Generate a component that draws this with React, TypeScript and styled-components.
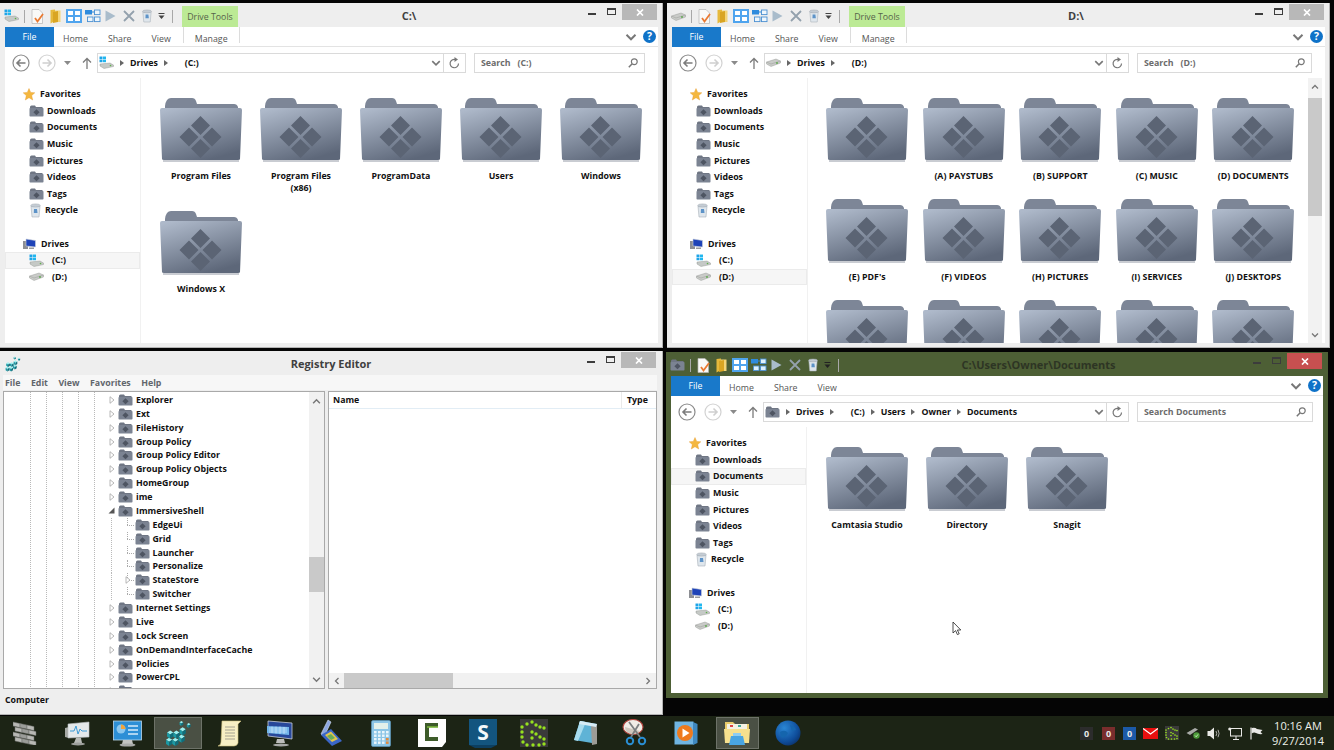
import React from 'react';
import styled, { createGlobalStyle } from 'styled-components';

const Global = createGlobalStyle`
  html, body { margin: 0; padding: 0; width: 1334px; height: 750px; overflow: hidden; background: #050505; }
  * { box-sizing: border-box; }
  body { font-family: "Open Sans", "Noto Sans", sans-serif; }
`;

const Desktop = styled.div`
  position: relative;
  width: 1334px;
  height: 750px;
  background: #050505;
  overflow: hidden;
`;

const Win = styled.section<{ $x: number; $y: number; $w: number; $h: number; $green?: boolean }>`
  position: absolute;
  left: ${p => p.$x}px;
  top: ${p => p.$y}px;
  width: ${p => p.$w}px;
  height: ${p => p.$h}px;
  background: ${p => (p.$green ? '#4d5f35' : '#eeeeee')};
  border-right: 1px solid ${p => (p.$green ? '#4d5f35' : '#b4b4b4')};
  border-bottom: 1px solid ${p => (p.$green ? '#4d5f35' : '#b4b4b4')};
  display: flex;
  flex-direction: column;
  padding: 0 4px 4px 5px;
`;

const TitleBar = styled.header`
  height: 24px;
  flex: none;
  display: flex;
  margin-left: -5px;
  margin-right: -4px;
`;

const Qat = styled.div<{ $w: number }>`
  width: ${p => p.$w}px;
  flex: none;
  display: flex;
  align-items: center;
  padding-left: 3px;
  padding-top: 2px;
`;

const QatSlot = styled.span<{ $w: number }>`
  width: ${p => p.$w}px;
  flex: none;
  display: flex;
  align-items: center;
  justify-content: center;
`;

const QatSep = styled.i`
  width: 1px;
  height: 13px;
  background: #a8a8a8;
`;

const DriveToolsTab = styled.div`
  width: 56px;
  height: 21px;
  align-self: flex-end;
  background: #bcea95;
  color: #56634a;
  font-size: 8.8px;
  display: flex;
  align-items: center;
  justify-content: center;
  flex: none;
`;

const WinTitle = styled.h1<{ $green?: boolean }>`
  flex: 1;
  margin: 0;
  font-size: 11px;
  font-weight: 700;
  text-align: center;
  line-height: 26px;
  color: ${p => (p.$green ? '#2d3524' : '#3f3f3f')};
  white-space: nowrap;
`;

const Controls = styled.div<{ $gapRight: number }>`
  flex: none;
  display: flex;
  align-items: flex-start;
  margin-top: 1px;
  margin-right: ${p => p.$gapRight}px;
`;

const MinGlyph = styled.i`
  width: 8px;
  height: 2px;
  background: #3c3c3c;
  margin: 9px 0 0 8px;
`;

const MaxGlyph = styled.i`
  width: 9px;
  height: 7px;
  border: 1px solid #3c3c3c;
  border-top-width: 2px;
  margin: 4px 6px 0 11px;
`;

const CloseBtn = styled.div<{ $red?: boolean }>`
  width: 35px;
  height: 16px;
  background: ${p => (p.$red ? '#c75050' : '#b8b8b8')};
  color: #fff;
  display: flex;
  align-items: center;
  justify-content: center;
`;

const Ribbon = styled.nav`
  height: 20px;
  flex: none;
  background: #fff;
  display: flex;
  align-items: stretch;
  border-bottom: 1px solid #e3e3e3;
  position: relative;
`;

const FileTab = styled.div`
  width: 49px;
  background: #1979ca;
  color: #fff;
  font-size: 8.8px;
  display: flex;
  align-items: center;
  justify-content: center;
  margin-bottom: -1px;
`;

const Tab = styled.div`
  padding: 4px 10px 0;
  font-size: 8.8px;
  color: #555;
  display: flex;
  align-items: center;
`;

const ManageTab = styled(Tab)`
  margin-left: 2px;
  height: 16px;
  padding-top: 8px;
  padding-left: 11px;
  padding-right: 11px;
  border-left: 1px solid #dcdcdc;
  border-right: 1px solid #dcdcdc;
`;

const TabsStart = styled.div`
  width: 0;
  margin-left: -1px;
`;

const RibbonRight = styled.div`
  margin-left: auto;
  display: flex;
  align-items: center;
  gap: 6px;
  padding-right: 2px;
`;

const Body = styled.div`
  flex: 1;
  min-height: 0;
  background: #fff;
  display: flex;
  flex-direction: column;
`;

const AddressRow = styled.div<{ $right: number }>`
  height: 31px;
  flex: none;
  display: flex;
  align-items: center;
  padding: 0 ${p => p.$right}px 0 7px;
`;

const NavBtns = styled.div`
  width: 85px;
  flex: none;
  display: flex;
  align-items: center;
`;

const NavGap = styled.span<{ $w: number }>`
  width: ${p => p.$w}px;
  flex: none;
`;

const AddressBar = styled.div`
  flex: 1;
  height: 20px;
  border: 1px solid #dadada;
  display: flex;
  align-items: center;
  padding-left: 1px;
  min-width: 0;
`;

const Crumb = styled.span<{ $indent?: number }>`
  font-size: 8.8px;
  font-weight: 700;
  color: #111;
  margin-left: ${p => p.$indent ?? 0}px;
  white-space: nowrap;
`;

const CrumbArrow = styled.span`
  width: 0;
  height: 0;
  border-left: 4px solid #666;
  border-top: 3px solid transparent;
  border-bottom: 3px solid transparent;
  margin: 0 6px;
  flex: none;
`;

const AddressEnd = styled.div`
  margin-left: auto;
  display: flex;
  align-items: center;
  height: 100%;
`;

const AddressChevron = styled.span`
  width: 14px;
  display: flex;
  justify-content: center;
`;

const Refresh = styled.span`
  width: 22px;
  height: 100%;
  border-left: 1px solid #dadada;
  display: flex;
  align-items: center;
  justify-content: center;
`;

const SearchBox = styled.div<{ $w: number }>`
  width: ${p => p.$w}px;
  margin-left: 8px;
  flex: none;
  height: 20px;
  border: 1px solid #dadada;
  display: flex;
  align-items: center;
  justify-content: space-between;
  padding: 0 6px 0 6px;
  font-size: 8.8px;
  font-weight: 700;
  color: #6b6b6b;
  white-space: pre;
`;

const Split = styled.div`
  flex: 1;
  min-height: 0;
  display: flex;
  position: relative;
  overflow: hidden;
`;

const NavPane = styled.aside<{ $top: number }>`
  width: 136px;
  flex: none;
  padding-top: ${p => p.$top}px;
  border-right: 1px solid #f1f1f1;
`;

const NavHead = styled.div<{ $gapTop?: boolean }>`
  height: 16.6px;
  margin-top: ${p => (p.$gapTop ? 16.6 : 0)}px;
  display: flex;
  align-items: center;
  padding-left: 18px;
  gap: 5px;
  font-size: 8.8px;
  font-weight: 700;
  color: #111;
`;

const NavItem = styled.div<{ $selected?: boolean; $gap: number }>`
  height: 16.6px;
  display: flex;
  align-items: center;
  padding-left: 24px;
  gap: ${p => p.$gap}px;
  font-size: 8.8px;
  font-weight: 700;
  color: #111;
  background: ${p => (p.$selected ? '#f6f6f6' : 'transparent')};
  box-shadow: ${p => (p.$selected ? 'inset 0 0 0 1px #ebebeb' : 'none')};
`;

const Tiles = styled.div<{ $col: number; $row: number; $left: number }>`
  flex: 1;
  min-width: 0;
  display: grid;
  grid-template-columns: repeat(auto-fill, ${p => p.$col}px);
  grid-auto-rows: ${p => p.$row}px;
  padding: 19px 0 0 ${p => p.$left}px;
  align-content: start;
`;

const Tile = styled.figure`
  margin: 0;
  display: flex;
  flex-direction: column;
  align-items: center;
`;

const TileLabel = styled.figcaption`
  margin-top: 7px;
  font-size: 8.8px;
  line-height: 12px;
  font-weight: 700;
  color: #111;
  text-align: center;
  white-space: pre-line;
`;

const VScroll = styled.div`
  position: absolute;
  top: 0;
  right: 3px;
  bottom: 0;
  width: 14px;
  background: #f2f2f2;
  display: flex;
  flex-direction: column;
  align-items: center;
  padding-top: 5px;
`;

const VThumb = styled.div`
  width: 14px;
  height: 118px;
  background: #c9c9c9;
  margin-top: 7px;
`;

const VDown = styled.div`
  margin-top: auto;
  margin-bottom: 4px;
  display: flex;
`;

/* Registry editor */
const RegWin = styled(Win)`
  padding: 0 5px 0 3px;
`;

const RegTitleRow = styled.header`
  height: 24px;
  flex: none;
  display: flex;
  margin-left: -3px;
  margin-right: -5px;
  position: relative;
`;

const RegIcon = styled.span`
  width: 83px;
  flex: none;
  padding: 4px 0 0 5px;
`;

const MenuBar = styled.div`
  height: 15px;
  flex: none;
  background: #f7f7f7;
  display: flex;
  align-items: center;
  gap: 10.5px;
  padding-left: 2px;
  font-size: 8.8px;
  font-weight: 700;
  color: #62666c;
`;

const Panes = styled.div`
  flex: none;
  height: 298px;
  margin-top: 1px;
  display: grid;
  grid-template-columns: 322px 329px;
  gap: 3px;
`;

const Pane = styled.div`
  border: 1px solid #a9a9a9;
  background: #fff;
  position: relative;
  overflow: hidden;
  display: flex;
  flex-direction: column;
`;

const dotted = 'repeating-linear-gradient(to bottom, #b9b9b9 0 1px, transparent 1px 2px)';

const TreePane = styled(Pane)`
  background-color: #fff;
  background-image: ${dotted}, ${dotted}, ${dotted}, ${dotted}, ${dotted};
  background-size: 1px 100%;
  background-repeat: no-repeat;
  background-position: 26px 0, 42px 0, 58px 0, 74px 0, 90px 0;
  padding-top: 1px;
`;

const TreeRow = styled.div<{ $child?: boolean }>`
  height: 13.88px;
  flex: none;
  display: flex;
  align-items: center;
  padding-left: ${p => (p.$child ? 119 : 102.5)}px;
  font-size: 8.8px;
  font-weight: 700;
  color: #111;
  white-space: nowrap;
  position: relative;
  ${p =>
    p.$child
      ? `background-image: ${dotted};
         background-size: 1px 100%;
         background-repeat: no-repeat;
         background-position: 107px 0;
         &::before { content: ""; position: absolute; left: 123px; top: 0; height: 50%; border-left: 1px dotted #aaa; }
         &::after { content: ""; position: absolute; left: 123px; top: 50%; width: 7px; border-top: 1px dotted #aaa; }`
      : ''}
`;

const Expander = styled.span`
  width: 10px;
  flex: none;
  display: flex;
  justify-content: center;
  position: relative;
  z-index: 1;
`;

const TreeFolder = styled.span`
  margin: 0 3px 0 1.5px;
  display: flex;
  position: relative;
  z-index: 1;
`;

const TreeScroll = styled.div`
  position: absolute;
  top: 0;
  right: 0;
  bottom: 0;
  width: 15px;
  background: #f1f1f1;
  display: flex;
  flex-direction: column;
  align-items: center;
  padding-top: 5px;
  z-index: 2;
`;

const TreeThumb = styled.div`
  width: 15px;
  height: 35px;
  background: #c9c9c9;
  margin-top: 151px;
`;

const ListHead = styled.div`
  height: 17px;
  flex: none;
  display: flex;
  justify-content: space-between;
  align-items: center;
  font-size: 8.8px;
  font-weight: 700;
  color: #111;
  padding-left: 4px;
  border-bottom: 1px solid #e2edf5;
`;

const TypeCell = styled.span`
  width: 35px;
  padding-left: 5px;
  height: 100%;
  display: flex;
  align-items: center;
  border-left: 1px solid #eaeaea;
`;

const HScroll = styled.div`
  margin-top: auto;
  height: 15px;
  flex: none;
  background: #f1f1f1;
  display: flex;
  align-items: center;
  padding-left: 4px;
  padding-right: 4px;
  justify-content: space-between;
`;

const HThumb = styled.div`
  position: absolute;
  left: 15px;
  bottom: 0;
  width: 109px;
  height: 15px;
  background: #c9c9c9;
`;

const Status = styled.footer`
  flex: 1;
  font-size: 8.8px;
  font-weight: 700;
  color: #111;
  padding: 5px 0 0 2px;
`;

/* Taskbar */
const Taskbar = styled.footer`
  position: absolute;
  left: 0;
  right: 0;
  bottom: 0;
  height: 34px;
  background: #1c2415;
  display: flex;
  align-items: stretch;
  padding-left: 0.5px;
`;

const TaskSlot = styled.div`
  width: 50.8px;
  flex: none;
  display: flex;
  align-items: center;
  justify-content: center;
`;

const TaskInner = styled.div<{ $active?: boolean; $w?: number }>`
  width: ${p => p.$w ?? 48}px;
  height: 32px;
  display: flex;
  align-items: center;
  justify-content: center;
  background: ${p => (p.$active ? '#4a5044' : 'transparent')};
  box-shadow: ${p => (p.$active ? 'inset 0 0 0 1px #6d7268' : 'none')};
`;

const Tray = styled.div`
  margin-left: auto;
  display: flex;
  align-items: center;
  padding-right: 5px;
`;

const TraySlot = styled.span`
  width: 21.2px;
  display: flex;
  justify-content: center;
  align-items: center;
`;

const Clock = styled.time`
  width: 62px;
  color: #eef0ea;
  font-size: 11px;
  line-height: 15px;
  text-align: center;
  white-space: nowrap;
`;

const Cursor = styled.svg`
  position: absolute;
  left: 952px;
  top: 621px;
`;

/* ---------- drawings ---------- */
const FolderDefs = () => (
  <defs>
    <linearGradient id="fbody" x1="0.15" y1="0" x2="0.6" y2="1">
      <stop offset="0" stopColor="#aeb9ca" />
      <stop offset="1" stopColor="#5d6779" />
    </linearGradient>
  </defs>
);

const Folder = ({ w = 82, h = 66 }: { w?: number; h?: number }) => (
  <svg width={w} height={h} viewBox="0 0 82 66">
    <FolderDefs />
    <path d="M5 9 Q6 1 11 1 L32 1 Q35 1 36 4 L37 7 L74 7 Q77 7 78 10 L78 12 L5 12Z" fill="#7d8697" />
    <path d="M2 11 H80 Q82 11 82 13 L80 62 Q80 63 78 63 H4 Q2 63 2 62 L0 13 Q0 11 2 11Z" fill="url(#fbody)" />
    <rect x="3" y="63" width="76" height="2" fill="#c9ccd2" />
    <path d="M40.5 19 L50 28.5 L40.5 38 L31 28.5Z M52 30.5 L61.5 40 L52 49.5 L42.5 40Z M40.5 42 L50 51.5 L40.5 61 L31 51.5Z M29 30.5 L38.5 40 L29 49.5 L19.5 40Z" fill="#5b6474" />
  </svg>
);

const SmallFolder = () => (
  <svg width="15" height="12" viewBox="0 0 15 12">
    <path d="M1 2 Q1 0.5 2.5 0.5 H6 L7 2 H13.5 V3.5 H1Z" fill="#6f7684" />
    <rect x="0.5" y="3" width="14" height="8.5" rx="0.8" fill="#7b8392" />
    <path d="M7.5 4.2 L10.6 7.2 L7.5 10.2 L4.4 7.2Z" fill="#4e5562" />
  </svg>
);

const Star = () => (
  <svg width="12" height="13" viewBox="0 0 12 13">
    <path d="M6 0.5 L7.7 4.4 L11.8 4.8 L8.7 7.6 L9.7 12 L6 9.7 L2.3 12 L3.3 7.6 L0.2 4.8 L4.3 4.4Z" fill="#f4b73f" stroke="#e69a2e" strokeWidth="0.4" />
  </svg>
);

const Bin = ({ size = 13 }: { size?: number }) => (
  <svg width={size} height={size + 2} viewBox="0 0 13 15">
    <path d="M2 3 L11 3 L10 14 H3Z" fill="#dfe6ec" stroke="#a8b0b8" strokeWidth="0.6" />
    <ellipse cx="6.5" cy="2.5" rx="4.8" ry="1.6" fill="#c4ccd4" stroke="#9aa2aa" strokeWidth="0.5" />
    <path d="M5 6 L8 6 L8.5 10 L4.8 10Z" fill="#5d93c8" />
  </svg>
);

const DriveC = ({ w = 15 }: { w?: number }) => (
  <svg width={w} height={w * 0.87} viewBox="0 0 15 13">
    <rect x="0.5" y="0.5" width="3" height="2.6" fill="#1ea4e8" />
    <rect x="4" y="0.5" width="3" height="2.6" fill="#21b7ef" />
    <rect x="0.5" y="3.6" width="3" height="2.6" fill="#1ea4e8" />
    <rect x="4" y="3.6" width="3" height="2.6" fill="#21b7ef" />
    <path d="M1 8 L11 7 L14.5 9 L14.5 10.5 L5 12.5 L1 10Z" fill="#c5c9c6" stroke="#8b8f8b" strokeWidth="0.4" />
    <circle cx="11.5" cy="9.5" r="0.8" fill="#5fb04a" />
  </svg>
);

const DriveD = ({ w = 15 }: { w?: number }) => (
  <svg width={w} height={w * 0.6} viewBox="0 0 15 9">
    <path d="M0.5 4 L10 1 L14.5 3 L14.5 5 L5 8.5 L0.5 6Z" fill="#c9cbc8" stroke="#8d8f8d" strokeWidth="0.4" />
    <path d="M0.5 4 L5 6 L14.5 3" fill="none" stroke="#8d8f8d" strokeWidth="0.4" />
    <circle cx="11" cy="5" r="0.9" fill="#58a848" />
  </svg>
);

const DrivesPc = () => (
  <svg width="13" height="12" viewBox="0 0 13 12">
    <rect x="0" y="3" width="5" height="8" fill="#8d8f94" />
    <path d="M3 1 L12.5 2.5 V9 L3 8Z" fill="#1e43b8" stroke="#cfd3dc" strokeWidth="0.6" />
    <rect x="6" y="9.5" width="5" height="1.5" fill="#9a9ca0" />
  </svg>
);

const DocCheck = () => (
  <svg width="13" height="15" viewBox="0 0 13 15">
    <path d="M1 0.5 H8 L11.5 4 V14.5 H1Z" fill="#f9f9f7" stroke="#b5b5b5" strokeWidth="0.7" />
    <path d="M4 9 L6.5 12.5 L12 5" fill="none" stroke="#ea7a32" strokeWidth="1.8" />
  </svg>
);

const BookFolder = () => (
  <svg width="11" height="15" viewBox="0 0 11 15">
    <path d="M0.5 1 L5 0.5 V12 L0.5 14.5Z" fill="#e6b93c" />
    <path d="M5 1.5 H10.5 V13 H5Z" fill="#f3d478" />
    <path d="M3 3 L8 2 V13 L3 14Z" fill="#d9a523" />
  </svg>
);

const BlueGrid = ({ filled }: { filled?: boolean }) => (
  <svg width="16" height="14" viewBox="0 0 16 14">
    {filled && <rect width="16" height="14" fill="#4fa4ee" />}
    {[
      [2, 2],
      [9, 2],
      [2, 8],
      [9, 8]
    ].map(([x, y]) => (
      <rect key={`${x}-${y}`} x={x} y={y} width="5" height="4" fill={filled ? '#fff' : '#eef6fc'} stroke={filled ? 'none' : '#4a90d2'} strokeWidth="0.9" />
    ))}
  </svg>
);

const Grid2 = ({ solid }: { solid?: boolean }) => (
  <svg width="16" height="14" viewBox="0 0 16 14">
    <rect x="0" y="1" width="7" height="4.5" fill="#2f8bdd" />
    <path d="M7 3 L10 3" stroke="#2f8bdd" strokeWidth="1" />
    {[
      [9.5, 1],
      [2.5, 8],
      [9.5, 8]
    ].map(([x, y]) => (
      <rect key={`${x}-${y}`} x={x} y={y} width="5.5" height="4.6" fill={solid ? '#dff0fb' : '#eef6fc'} stroke="#4a90d2" strokeWidth="0.9" />
    ))}
  </svg>
);

const Play = () => (
  <svg width="11" height="12" viewBox="0 0 11 12">
    <path d="M0.5 0.5 L10.5 6 L0.5 11.5Z" fill="#a9bccb" />
  </svg>
);

const Cross = () => (
  <svg width="12" height="12" viewBox="0 0 12 12">
    <path d="M1 1 L11 11 M11 1 L1 11" stroke="#93a1ad" strokeWidth="1.8" />
  </svg>
);

const DropSmall = ({ dark }: { dark?: boolean }) => (
  <svg width="7" height="7" viewBox="0 0 7 7">
    <rect x="0.5" y="0" width="6" height="1" fill={dark ? '#222' : '#444'} />
    <path d="M0.5 2.5 H6.5 L3.5 6Z" fill={dark ? '#222' : '#444'} />
  </svg>
);

const CircleArrow = ({ light, back }: { light?: boolean; back?: boolean }) => (
  <svg width="18" height="18" viewBox="0 0 18 18">
    <circle cx="9" cy="9" r="8" fill="none" stroke={light ? '#d2d2d2' : '#8a8a8a'} strokeWidth="1.2" />
    <path d={back ? 'M13.5 9 H5 M8.5 5.5 L5 9 L8.5 12.5' : 'M4.5 9 H13 M9.5 5.5 L13 9 L9.5 12.5'} fill="none" stroke={light ? '#cfcfcf' : '#7c7c7c'} strokeWidth="1.6" />
  </svg>
);

const TinyDown = () => (
  <svg width="7" height="4" viewBox="0 0 7 4">
    <path d="M0 0 H7 L3.5 4Z" fill="#8a8a8a" />
  </svg>
);

const UpArrow = () => (
  <svg width="10" height="12" viewBox="0 0 10 12">
    <path d="M5 12 V1.5 M1 5.5 L5 1.5 L9 5.5" fill="none" stroke="#7b7b7b" strokeWidth="1.3" />
  </svg>
);

const Chev = ({ dir = 'down', size = 8, color = '#777' }: { dir?: 'down' | 'up' | 'left' | 'right'; size?: number; color?: string }) => {
  const d = { down: 'M1 2.5 L4 5.5 L7 2.5', up: 'M1 5.5 L4 2.5 L7 5.5', left: 'M5.5 1 L2.5 4 L5.5 7', right: 'M2.5 1 L5.5 4 L2.5 7' }[dir];
  return (
    <svg width={size} height={size} viewBox="0 0 8 8">
      <path d={d} fill="none" stroke={color} strokeWidth="1.3" />
    </svg>
  );
};

const RefreshIcon = () => (
  <svg width="11" height="12" viewBox="0 0 11 12">
    <path d="M9.5 6.5 A4.2 4.2 0 1 1 6.5 2.5" fill="none" stroke="#777" strokeWidth="1.2" />
    <path d="M5.5 0 L9 2.5 L5.5 5Z" fill="#777" />
  </svg>
);

const Magnifier = () => (
  <svg width="10" height="10" viewBox="0 0 10 10">
    <circle cx="6.3" cy="3.7" r="2.9" fill="none" stroke="#777" strokeWidth="1.2" />
    <path d="M4.2 5.8 L0.8 9.2" stroke="#777" strokeWidth="1.5" />
  </svg>
);

const Help = () => (
  <svg width="13" height="13" viewBox="0 0 13 13">
    <circle cx="6.5" cy="6.5" r="6.5" fill="#0f72c8" />
    <text x="6.5" y="10.3" textAnchor="middle" fontSize="10.5" fontWeight="700" fill="#fff" fontFamily="Open Sans">?</text>
  </svg>
);

const CloseX = () => (
  <svg width="8" height="7" viewBox="0 0 8 7">
    <path d="M1 0.5 L7 6.5 M7 0.5 L1 6.5" stroke="#fff" strokeWidth="1.7" />
  </svg>
);

const Cube = ({ x, y, s = 1 }: { x: number; y: number; s?: number }) => (
  <g transform={`translate(${x} ${y}) scale(${s})`}>
    <path d="M0 2 L3 0 L6 2 L3 4Z" fill="#9df0f0" />
    <path d="M0 2 L3 4 V8 L0 6Z" fill="#1b9aa5" />
    <path d="M6 2 L3 4 V8 L6 6Z" fill="#0e6e7c" />
  </g>
);

const Regedit = ({ size = 26 }: { size?: number }) => (
  <svg width={size} height={size} viewBox="0 0 26 26">
    <Cube x={1} y={17} />
    <Cube x={7} y={17} />
    <Cube x={13} y={14} />
    <Cube x={2} y={10} />
    <Cube x={8} y={10} />
    <Cube x={14} y={7} />
    <Cube x={14} y={1} s={0.6} />
    <Cube x={21} y={3} s={0.6} />
  </svg>
);

/* Taskbar art */
const Wall = () => (
  <svg width="25" height="24" viewBox="0 0 25 24">
    {[0, 5, 10, 15].map(r =>
      [0, 1, 2].map(c => (
        <path key={`${r}-${c}`} d={`M${c * 7 + (r % 10 ? 2 : 0)} ${r + c * 1.5 + 1} l7 1.6 v4 l-7 -1.6Z`} fill={c % 2 ? '#9a9c98' : '#b7b8b4'} stroke="#6b6c68" strokeWidth="0.5" />
      ))
    )}
  </svg>
);

const PulseMonitor = () => (
  <svg width="26" height="26" viewBox="0 0 26 26">
    <path d="M1 8 L5 7 V18 L1 17Z" fill="#a5a8a4" />
    <path d="M4 4 L25 2 V17 L4 18Z" fill="#e4e8ea" stroke="#b9bdbf" strokeWidth="0.6" />
    <path d="M6 11 H10 L12 6 L14 14 L16 9 L18 11 H23" fill="none" stroke="#3d9ad5" strokeWidth="1" />
    <path d="M12 18 H17 L18 23 H10Z" fill="#b8bab7" />
    <ellipse cx="14" cy="24" rx="7" ry="1.5" fill="#9d9f9c" />
  </svg>
);

const DashMonitor = () => (
  <svg width="29" height="27" viewBox="0 0 29 27">
    <rect x="0.5" y="1" width="28" height="19" fill="#2d8fd6" stroke="#bcd9ee" strokeWidth="0.8" />
    <circle cx="8" cy="9" r="4.5" fill="#8cc7ee" />
    <path d="M8 4.5 A4.5 4.5 0 0 1 12.5 9 H8Z" fill="#f2a43b" />
    <path d="M15 6 H25 M15 10 H25 M15 14 H25" stroke="#d6ecfa" strokeWidth="1.4" />
    <path d="M10 20 H19 L20 24 H9Z" fill="#c2c4c2" />
    <ellipse cx="14.5" cy="25" rx="8" ry="1.6" fill="#a8aaa8" />
  </svg>
);

const Scroll = () => (
  <svg width="25" height="27" viewBox="0 0 25 27">
    <path d="M5 1 H24 L21 4 V23 Q20 26 17 26 H1 Q4 25 4 22Z" fill="#f7efc4" stroke="#cdbf7c" strokeWidth="0.6" />
    <path d="M8 7 H18 M8 10 H18 M8 13 H18 M8 16 H18 M8 19 H18" stroke="#9b9a8c" strokeWidth="0.9" />
  </svg>
);

const KeyboardMon = () => (
  <svg width="27" height="27" viewBox="0 0 27 27">
    <path d="M2 1 L26 3 V19 L2 16Z" fill="#27489b" stroke="#c8cdd8" strokeWidth="0.8" />
    <path d="M1 6 L23 7 V15 L1 13Z" fill="#71b5ea" />
    <path d="M3 8 H21 M3 10 H21 M3 12 H21 M6 6.5 V13 M10 6.5 V13.5 M14 6.5 V14 M18 7 V14" stroke="#dcefff" strokeWidth="0.6" />
    <path d="M11 19 H18 L19 23 H10Z" fill="#bcbdbb" />
    <ellipse cx="15" cy="25" rx="8" ry="1.5" fill="#a6a8a6" />
  </svg>
);

const Scanner = () => (
  <svg width="24" height="28" viewBox="0 0 24 28">
    <path d="M9 1 L12 3 L5 18 L2 15Z" fill="#8ba6e0" stroke="#d9e2f5" strokeWidth="0.6" />
    <path d="M2 16 L12 10 L23 22 L13 27Z" fill="#3a66c8" />
    <path d="M6 16 L12 12.5 L19 20 L13 23Z" fill="#e2c54e" />
    <path d="M8 17 L12 15 L16 19 L12 21Z" fill="#68ad5a" />
  </svg>
);

const Calc = () => (
  <svg width="20" height="27" viewBox="0 0 20 27">
    <rect x="0.5" y="0.5" width="19" height="26" rx="1.5" fill="#8cc5e6" stroke="#5c9cc4" strokeWidth="0.6" />
    <rect x="3" y="3" width="14" height="6" fill="#e2f0ea" />
    {[11, 14.5, 18, 21.5].map(y =>
      [3, 7, 11, 15].map(x => <rect key={`${x}-${y}`} x={x} y={y} width="2.6" height="2.4" fill={x === 15 && y > 17 ? '#e48a3c' : '#eaf5fb'} />)
    )}
  </svg>
);

const Camtasia = ({ size = 28 }: { size?: number }) => (
  <svg width={size} height={size} viewBox="0 0 28 28">
    <path d="M0 0 H28 V23 L24 28 H0Z" fill="#fdfdfd" />
    <path d="M20 6 H9 V20 H20" fill="none" stroke="#3c5a28" strokeWidth="4" />
    <path d="M9 8 H20" stroke="#79b43a" strokeWidth="1.6" />
  </svg>
);

const Snagit = () => (
  <svg width="28" height="29" viewBox="0 0 28 29">
    <rect x="0" y="0" width="28" height="26" fill="#13557f" />
    <path d="M0 26 H28 L22 29 H6Z" fill="#0d3f60" />
    <text x="14" y="21" textAnchor="middle" fontSize="21" fontWeight="700" fontFamily="Open Sans" fill="#f4f8fa">S</text>
  </svg>
);

const dots = [[2, 8], [2, 13], [2, 18], [3, 23], [7, 5], [12, 3], [16, 6], [20, 8], [24, 9], [7, 26], [12, 13], [16, 15], [20, 18], [24, 20], [24, 25], [19, 26], [13, 26], [12, 19]];
const Greenshot = ({ size = 28 }: { size?: number }) => (
  <svg width={size} height={size} viewBox="0 0 28 28">
    <rect width="28" height="28" fill="#3a3a3a" />
    {dots.map(([x, y]) => <circle key={`${x}-${y}`} cx={x} cy={y} r="1.7" fill="#96e01e" />)}
  </svg>
);

const Notepad = () => (
  <svg width="26" height="26" viewBox="0 0 26 26">
    <path d="M8 1 L25 4 L20 23 L2 20Z" fill="#5fb3d6" />
    <path d="M8 1 L14 2 L6 21 L2 20Z" fill="#a8dcee" />
    <path d="M19 6 L25 4 V24 L20 25Z" fill="#9c9c96" />
    <path d="M8 1 L25 4 L24 7 L7 4Z" fill="#d7ecf5" />
  </svg>
);

const Snip = () => (
  <svg width="26" height="29" viewBox="0 0 26 29">
    <ellipse cx="11" cy="8" rx="10" ry="7.5" fill="#f1ece6" stroke="#b1453f" strokeWidth="1.1" />
    <path d="M3 8 Q3 15 11 15 Q16 15 18 12" fill="#cfc8be" />
    <path d="M7 3 L18 18 M17 5 L9 18" stroke="#7c7f80" strokeWidth="1.8" />
    <circle cx="8" cy="22" r="3.2" fill="none" stroke="#2a8ed3" strokeWidth="2" />
    <circle cx="20" cy="22" r="3.2" fill="none" stroke="#2a8ed3" strokeWidth="2" />
  </svg>
);

const MediaPlayer = () => (
  <svg width="24" height="24" viewBox="0 0 24 24">
    <rect x="0.5" y="0.5" width="19" height="23" fill="#6fb4e2" />
    <path d="M19 1 L23.5 3 V22 L19 24Z" fill="#3f88bf" />
    <circle cx="11" cy="12" r="8" fill="#ee7a1e" />
    <path d="M8.5 7.5 L15.5 12 L8.5 16.5Z" fill="#fff" />
  </svg>
);

const ExplorerIcon = () => (
  <svg width="28" height="28" viewBox="0 0 28 28">
    <path d="M2 3 H10 L12 5 H26 V23 H2Z" fill="#e9cb6a" />
    <rect x="4" y="5" width="20" height="5" fill="#f5f2e4" />
    <rect x="7" y="6" width="3" height="2" fill="#d44" />
    <rect x="15" y="6" width="3" height="2" fill="#4a9" />
    <path d="M1 10 H27 L26 24 H2Z" fill="#f6e08e" />
    <path d="M8 17 H20 L22 26 H6Z" fill="#49a5e2" />
    <path d="M10 14 H18 V17 H10Z" fill="#8ecdf2" />
  </svg>
);

const Globe = () => (
  <svg width="26" height="26" viewBox="0 0 26 26">
    <defs>
      <radialGradient id="gl" cx="0.35" cy="0.3" r="0.85">
        <stop offset="0" stopColor="#2a86d4" />
        <stop offset="0.65" stopColor="#0f4d9a" />
        <stop offset="1" stopColor="#0a2a5c" />
      </radialGradient>
    </defs>
    <circle cx="13" cy="13" r="12.5" fill="url(#gl)" />
    <path d="M5 12 Q10 9 13 13 Q10 19 6 17Z M15 5 Q20 6 21 10 L17 11Z" fill="#1565ad" />
  </svg>
);

const Badge = ({ c }: { c: string }) => (
  <svg width="13" height="13" viewBox="0 0 13 13">
    <rect width="13" height="13" fill={c} />
    <text x="6.5" y="10" textAnchor="middle" fontSize="9" fontWeight="700" fontFamily="Open Sans" fill="#e9e9e9">0</text>
  </svg>
);

const Mail = () => (
  <svg width="15" height="11" viewBox="0 0 15 11">
    <rect width="15" height="11" fill="#e8100f" />
    <path d="M0 0.5 L7.5 6 L15 0.5" fill="none" stroke="#fff" strokeWidth="1.2" />
  </svg>
);

const TrayUsb = () => (
  <svg width="14" height="12" viewBox="0 0 14 12">
    <path d="M0.5 6 L9 1 L12 2.5 L4 8Z" fill="#a9aba8" />
    <circle cx="10.5" cy="8.5" r="3.2" fill="#4d9c3a" />
    <path d="M9 8.5 L10.2 9.8 L12 7.4" fill="none" stroke="#dff2d6" strokeWidth="0.8" />
  </svg>
);

const Speaker = () => (
  <svg width="14" height="13" viewBox="0 0 14 13">
    <path d="M0.5 4 H3 L7 0.5 V12.5 L3 9 H0.5Z" fill="#e9e9e6" />
    <path d="M9 4 Q10.5 6.5 9 9 M11 2.8 Q13.2 6.5 11 10.2" fill="none" stroke="#b8b8b4" strokeWidth="0.9" />
  </svg>
);

const TrayNet = () => (
  <svg width="14" height="13" viewBox="0 0 14 13">
    <rect x="2.5" y="1.5" width="11" height="7.5" fill="none" stroke="#e9e9e6" strokeWidth="1" />
    <path d="M8 9 V12 M5 12.5 H11" stroke="#e9e9e6" strokeWidth="1" />
    <circle cx="1.8" cy="2" r="1.6" fill="#e9e9e6" />
  </svg>
);

const TrayFlag = () => (
  <svg width="13" height="13" viewBox="0 0 13 13">
    <path d="M1 0.5 V12.5" stroke="#e9e9e6" strokeWidth="1.2" />
    <path d="M1.6 1 Q5 0 7 2 L12.5 3 L10.5 5 L12.5 7 Q8 7.5 6 6 Q4 5 1.6 6.5Z" fill="#e9e9e6" />
  </svg>
);

/* ---------- data ---------- */
const favourites = ['Downloads', 'Documents', 'Music', 'Pictures', 'Videos', 'Tags'];

type TreeItem = [string, boolean?, 'exp' | 'none' | 'col'?];
const tree: TreeItem[] = [
  ['Explorer'], ['Ext'], ['FileHistory'], ['Group Policy'], ['Group Policy Editor'], ['Group Policy Objects'],
  ['HomeGroup'], ['ime'], ['ImmersiveShell', false, 'exp'],
  ['EdgeUi', true, 'none'], ['Grid', true, 'none'], ['Launcher', true, 'none'], ['Personalize', true, 'none'],
  ['StateStore', true, 'col'], ['Switcher', true, 'none'],
  ['Internet Settings'], ['Live'], ['Lock Screen'], ['OnDemandInterfaceCache'], ['Policies'], ['PowerCPL'], ['']
];

const Side = ({ selected, top }: { selected: string; top: number }) => (
  <NavPane $top={top}>
    <NavHead><Star />Favorites</NavHead>
    {favourites.map(f => (
      <NavItem key={f} $gap={3} $selected={selected === f}><SmallFolder />{f}</NavItem>
    ))}
    <NavItem $gap={3}><Bin size={13} />Recycle</NavItem>
    <NavHead $gapTop><DrivesPc />Drives</NavHead>
    <NavItem $gap={8} $selected={selected === 'C'}><DriveC />(C:)</NavItem>
    <NavItem $gap={8} $selected={selected === 'D'}><DriveD />(D:)</NavItem>
  </NavPane>
);

interface ExplorerProps {
  x: number; y: number; w: number; h: number;
  title: string;
  green?: boolean;
  driveTools?: boolean;
  qatIcon: React.ReactNode;
  qatWidth: number;
  crumbs: [string, number?][];
  crumbIcon: React.ReactNode;
  search: string;
  searchW: number;
  rowRight: number;
  selected: string;
  navTop: number;
  tiles: string[];
  col: number; row: number; left: number;
  scroll?: boolean;
}

const Explorer = (p: ExplorerProps) => (
  <Win $x={p.x} $y={p.y} $w={p.w} $h={p.h} $green={p.green}>
    <TitleBar>
      <Qat $w={p.qatWidth}>
        <QatSlot $w={17}>{p.qatIcon}</QatSlot>
        <QatSlot $w={8}><QatSep /></QatSlot>
        <QatSlot $w={19}><DocCheck /></QatSlot>
        <QatSlot $w={17}><BookFolder /></QatSlot>
        <QatSlot $w={20}><BlueGrid filled /></QatSlot>
        <QatSlot $w={17}><Grid2 solid={p.green} /></QatSlot>
        <QatSlot $w={19}><Play /></QatSlot>
        <QatSlot $w={17}><Cross /></QatSlot>
        <QatSlot $w={19}><Bin size={12} /></QatSlot>
        <QatSlot $w={10}><DropSmall dark={p.green} /></QatSlot>
        <QatSlot $w={12}><QatSep /></QatSlot>
      </Qat>
      {p.driveTools && <DriveToolsTab>Drive Tools</DriveToolsTab>}
      <WinTitle $green={p.green}>{p.title}</WinTitle>
      <Controls $gapRight={5}>
        <MinGlyph />
        <MaxGlyph />
        <CloseBtn $red={p.green}><CloseX /></CloseBtn>
      </Controls>
    </TitleBar>
    <Ribbon>
      <FileTab>File</FileTab>
      <TabsStart />
      <Tab>Home</Tab>
      <Tab>Share</Tab>
      <Tab>View</Tab>
      {p.driveTools && <ManageTab>Manage</ManageTab>}
      <RibbonRight>
        <Chev size={12} />
        <Help />
      </RibbonRight>
    </Ribbon>
    <Body>
      <AddressRow $right={p.rowRight}>
        <NavBtns>
          <CircleArrow back />
          <NavGap $w={8} />
          <CircleArrow light />
          <NavGap $w={8} />
          <TinyDown />
          <NavGap $w={11} />
          <UpArrow />
        </NavBtns>
        <AddressBar>
          {p.crumbIcon}
          {p.crumbs.map(([c, indent]) => (
            <React.Fragment key={c}>
              <CrumbArrow />
              <Crumb $indent={indent}>{c}</Crumb>
            </React.Fragment>
          ))}
          <AddressEnd>
            <AddressChevron><Chev size={10} /></AddressChevron>
            <Refresh><RefreshIcon /></Refresh>
          </AddressEnd>
        </AddressBar>
        <SearchBox $w={p.searchW}>{p.search}<Magnifier /></SearchBox>
      </AddressRow>
      <Split>
        <Side selected={p.selected} top={p.navTop} />
        <Tiles $col={p.col} $row={p.row} $left={p.left}>
          {p.tiles.map((t, i) => (
            <Tile key={`${t}-${i}`}>
              <Folder />
              <TileLabel>{t}</TileLabel>
            </Tile>
          ))}
        </Tiles>
        {p.scroll && (
          <VScroll>
            <Chev dir="up" size={8} />
            <VThumb />
            <VDown><Chev dir="down" size={8} /></VDown>
          </VScroll>
        )}
      </Split>
    </Body>
  </Win>
);

const Registry = () => (
  <RegWin $x={0} $y={351} $w={663} $h={364}>
    <RegTitleRow>
      <RegIcon><Regedit size={16} /></RegIcon>
      <WinTitle>Registry Editor</WinTitle>
      <Controls $gapRight={6}>
        <MinGlyph />
        <MaxGlyph />
        <CloseBtn><CloseX /></CloseBtn>
      </Controls>
    </RegTitleRow>
    <MenuBar>
      <span>File</span><span>Edit</span><span>View</span><span>Favorites</span><span>Help</span>
    </MenuBar>
    <Panes>
      <TreePane>
        {tree.map(([name, child, kind], i) => (
          <TreeRow key={`${name}-${i}`} $child={child}>
            <Expander>
              {kind === 'exp' ? (
                <svg width="7" height="7" viewBox="0 0 7 7"><path d="M6.5 0.5 V6.5 H0.5Z" fill="#555" /></svg>
              ) : kind === 'none' ? null : (
                <svg width="6" height="8" viewBox="0 0 6 8"><path d="M1 0.7 L5 4 L1 7.3Z" fill="#fff" stroke="#a6a6a6" strokeWidth="0.8" /></svg>
              )}
            </Expander>
            <TreeFolder><SmallFolder /></TreeFolder>
            {name}
          </TreeRow>
        ))}
        <TreeScroll>
          <Chev dir="up" size={9} />
          <TreeThumb />
          <VDown><Chev dir="down" size={9} /></VDown>
        </TreeScroll>
      </TreePane>
      <Pane>
        <ListHead>
          <span>Name</span>
          <TypeCell>Type</TypeCell>
        </ListHead>
        <HScroll>
          <Chev dir="left" size={8} />
          <Chev dir="right" size={8} />
        </HScroll>
        <HThumb />
      </Pane>
    </Panes>
    <Status>Computer</Status>
  </RegWin>
);

const TaskIcons: { icon: React.ReactNode; active?: boolean; w?: number }[] = [
  { icon: <Wall /> },
  { icon: <PulseMonitor /> },
  { icon: <DashMonitor /> },
  { icon: <Regedit size={27} />, active: true },
  { icon: <Scroll /> },
  { icon: <KeyboardMon /> },
  { icon: <Scanner /> },
  { icon: <Calc /> },
  { icon: <Camtasia /> },
  { icon: <Snagit /> },
  { icon: <Greenshot /> },
  { icon: <Notepad /> },
  { icon: <Snip /> },
  { icon: <MediaPlayer /> },
  { icon: <ExplorerIcon />, active: true, w: 43 },
  { icon: <Globe /> }
];

const driveCols = ['(A) PAYSTUBS', '(B) SUPPORT', '(C) MUSIC', '(D) DOCUMENTS', "(E) PDF's", '(F) VIDEOS', '(H) PICTURES', '(I) SERVICES', '(J) DESKTOPS', '', '', '', '', ''];

export default function App() {
  return (
    <Desktop>
      <Global />
      <Explorer
        x={0} y={3} w={663} h={345}
        title="C:\"
        driveTools
        qatIcon={<DriveC />}
        qatWidth={182}
        crumbs={[['Drives'], ['(C:)', 11]]}
        crumbIcon={<DriveC />}
        search={'Search   (C:)'}
        searchW={171}
        rowRight={13}
        selected="C"
        navTop={8}
        tiles={['Program Files', 'Program Files\n(x86)', 'ProgramData', 'Users', 'Windows', 'Windows X']}
        col={100} row={113} left={10}
      />
      <Explorer
        x={667} y={3} w={663} h={345}
        title="D:\"
        driveTools
        qatIcon={<DriveD />}
        qatWidth={182}
        crumbs={[['Drives'], ['(D:)', 11]]}
        crumbIcon={<DriveD />}
        search={'Search   (D:)'}
        searchW={175}
        rowRight={13}
        selected="D"
        navTop={8}
        tiles={['', ...driveCols]}
        col={96.5} row={101} left={11}
        scroll
      />
      <Registry />
      <Explorer
        x={666} y={352} w={662} h={346}
        title="C:\Users\Owner\Documents"
        green
        qatIcon={<SmallFolder />}
        qatWidth={166}
        crumbs={[['Drives'], ['(C:)', 11], ['Users'], ['Owner'], ['Documents']]}
        crumbIcon={<SmallFolder />}
        search="Search Documents"
        searchW={176}
        rowRight={10}
        selected="Documents"
        navTop={8}
        tiles={['Camtasia Studio', 'Directory', 'Snagit']}
        col={100} row={113} left={10}
      />
      <Cursor width="11" height="15" viewBox="0 0 11 15">
        <path d="M1 1 V12 L3.6 9.6 L5.4 13.6 L7.2 12.8 L5.4 9 H8.8Z" fill="#fff" stroke="#222" strokeWidth="0.8" />
      </Cursor>
      <Taskbar>
        {TaskIcons.map((t, i) => (
          <TaskSlot key={i}>
            <TaskInner $active={t.active} $w={t.w}>{t.icon}</TaskInner>
          </TaskSlot>
        ))}
        <Tray>
          <TraySlot><Badge c="#2c2c2c" /></TraySlot>
          <TraySlot><Badge c="#7a2d2d" /></TraySlot>
          <TraySlot><Badge c="#1c5aa8" /></TraySlot>
          <TraySlot><Mail /></TraySlot>
          <TraySlot><Greenshot size={14} /></TraySlot>
          <TraySlot><TrayUsb /></TraySlot>
          <TraySlot><Speaker /></TraySlot>
          <TraySlot><TrayNet /></TraySlot>
          <TraySlot><TrayFlag /></TraySlot>
          <Clock>10:16 AM<br />9/27/2014</Clock>
        </Tray>
      </Taskbar>
    </Desktop>
  );
}
